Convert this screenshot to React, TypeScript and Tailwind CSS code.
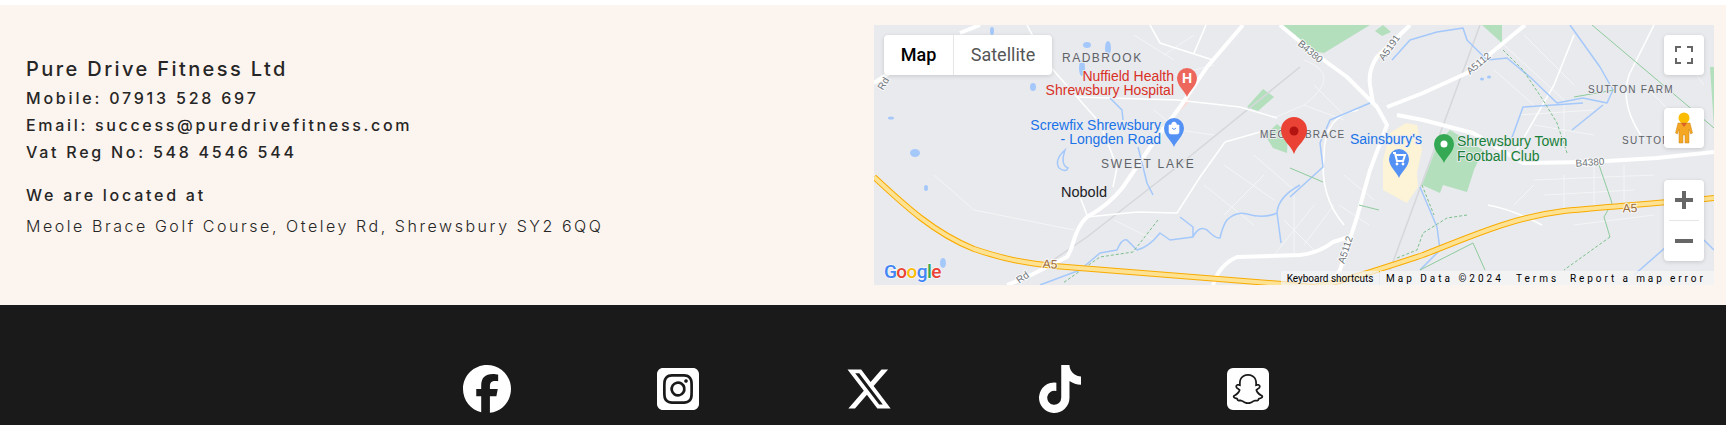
import { FaFacebook, FaSquareInstagram, FaXTwitter, FaTiktok, FaSquareSnapchat } from "react-icons/fa6"

const a5 = "M0 152C30 180 60 208 100 224C130 234 150 238 180 241L408 259L440 262C470 256 500 246 549 230C600 210 640 192 690 186C740 181 790 178 840 173"

const majorRoads = [
  "M369 0L333 42L306 82L279 118L249 162Q235 180 213 192Q204 200 199 218Q196 228 193 232L153 252L133 260",
  "M406 0L436 25L473 52L503 82L513 100L496 145L483 192L466 245L455 260",
  "M536 0L503 32Q494 45 496 60L499 78",
  "M513 82L549 68L593 48L651 0",
  "M523 90L549 95L599 108L649 138L716 137L783 133L840 127",
  "M339 260Q345 240 363 232L426 230Q445 228 459 217L475 212",
  "M0 58L20 45M106 0L86 8",
]

const minorRoads = [
  "M351 117L386 107M351 117L326 152L303 188L263 187L213 192",
  "M203 72L303 75L366 82L403 93",
  "M276 0L286 18L339 35",
  "M153 0L173 38L203 72L226 98L243 142L239 162",
  "M206 172L213 190",
  "M332 0L320 28",
  "M668 200Q640 185 614 180M700 10L680 60L640 130",
  "M780 0L755 50Q745 80 770 115",
  "M484 85Q450 90 450 130Q445 170 470 200",
]

const streets = [
  "M430 35Q470 50 430 80L402 92M430 80L470 95M440 60L470 90",
  "M290 30L320 10M300 50L340 40M260 10L300 35",
  "M330 160L380 200M350 140L400 175M380 130L420 165M390 150L350 190",
  "M420 170L420 230M440 180L400 230M460 180L430 220",
  "M270 100L340 110M280 85L310 110",
  "M630 20L690 75M650 10L700 60M620 45L660 80",
  "M645 90L720 85M660 100L720 110M690 75L690 125",
  "M660 155L780 150M670 170L760 165M720 140L720 180M690 150L690 185M750 140L750 180",
  "M700 200L780 190M640 180L660 160",
  "M800 20L830 60M770 60L820 110",
  "M470 150L500 175M465 180L495 200",
  "M240 195L280 215M410 195L440 225",
  "M60 150L100 185L200 205",
]

const water = [
  "M306 192L319 202L319 212Q325 200 333 205Q342 214 346 213Q349 200 353 195Q362 186 373 189Q390 194 403 188Q404 172 426 160",
  "M166 260L206 245L226 228L243 225Q248 213 253 215L263 225Q275 222 286 208L296 215L319 212",
  "M416 172L449 142L446 118L456 95L496 78",
  "M518 35L536 15L563 7L589 3L593 15L613 35L633 33L656 52L683 78L709 73L733 78L739 65L726 42L696 0",
  "M636 118L649 82L709 78",
  "M698 105L729 80",
  "M236 73L248 85L249 95",
  "M264 122L273 158L279 170",
  "M546 162L563 202L566 225L546 245",
  "M403 188L407 218",
  "M760 250L800 215M830 215L840 225",
]

const ponds = [
  [118, 6, 2, 4],
  [213, 20, 4, 3],
  [234, 23, 3, 7],
  [208, 43, 3, 8],
  [159, 62, 3, 4],
  [17, 93, 3, 1.5],
  [41, 128, 5, 4],
  [52, 163, 2, 3],
  [69, 238, 3, 5],
  [608, 54, 2, 1.5],
  [615, 52, 2, 1.5],
]

const greens = [
  "373,82 389,64 400,72 384,86",
  "391,110 403,99 414,108 413,128 399,123",
  "406,0 426,0 426,13",
  "416,0 496,0 450,28 430,25",
  "501,6 509,0 517,7 508,11",
  "608,0 628,0 628,18",
  "836,42 840,42 840,102",
  "548,160 564,118 576,105 609,125 600,145 593,167 569,160 566,168",
]

const dashed = [
  "M284 195L259 227L226 232L189 258",
  "M629 25L649 45L669 75L683 98L693 128",
  "M593 190L573 193L549 208L543 225L523 233",
  "M736 212L690 245",
  "M548 160L560 190",
]

const thinGreen = [
  "M718 0L840 103",
  "M416 143L449 157",
  "M546 245L599 218L611 245",
  "M725 140L738 178L730 192L736 212",
  "M700 72L740 65M485 180L505 185",
]

function Pin({ x, y, color, children }: { x: number; y: number; color: string; children?: React.ReactNode }) {
  return (
    <g transform={`translate(${x} ${y})`}>
      <path d="M0 19C-2 13 -10 8 -10 0A10 10 0 0 1 10 0C10 8 2 13 0 19Z" fill={color} />
      {children}
    </g>
  )
}

function Label({ x, y, children, fill = "#5f6368", size = 11, spacing = 1.1, anchor = "start" }: { x: number; y: number; children: string; fill?: string; size?: number; spacing?: number; anchor?: "start" | "end" }) {
  return (
    <text x={x} y={y} fill={fill} fontSize={size} letterSpacing={spacing} textAnchor={anchor} stroke="#e9eaee" strokeWidth={2} paintOrder="stroke" fontFamily="'Liberation Sans', sans-serif">
      {children}
    </text>
  )
}

function RoadLabel({ x, y, angle, children, fill = "#70757a", size = 10 }: { x: number; y: number; angle: number; children: string; fill?: string; size?: number }) {
  return (
    <text transform={`translate(${x} ${y}) rotate(${angle})`} textAnchor="middle" dominantBaseline="middle" fill={fill} fontSize={size} stroke="#ffffff" strokeOpacity={0.7} strokeWidth={2} paintOrder="stroke" fontFamily="'Liberation Sans', sans-serif">
      {children}
    </text>
  )
}

function MapDrawing() {
  return (
    <svg viewBox="0 0 840 260" width={840} height={260} className="block">
      <rect width={840} height={260} fill="#e8eaed" />
      <polygon points="532,98 543,100 548,125 543,148 544,162 533,178 509,165 509,135 516,108" fill="#fdf3d6" />
      {greens.map((p, i) => (
        <polygon key={i} points={p} fill="#b3dfbd" />
      ))}
      <path d="M303 84L314 72L316 76L306 86Z" fill="#fbdcd9" />
      {streets.map((d, i) => (
        <path key={i} d={d} fill="none" stroke="#f4f5f6" strokeWidth={1} />
      ))}
      <path d="M606 0L516 245M426 42L299 145L213 212L169 242" fill="none" stroke="#d5d7da" strokeWidth={1.5} />
      {minorRoads.map((d, i) => (
        <path key={i} d={d} fill="none" stroke="#ffffff" strokeWidth={1.6} />
      ))}
      {majorRoads.map((d, i) => (
        <path key={i} d={d} fill="none" stroke="#ffffff" strokeWidth={4} strokeLinejoin="round" />
      ))}
      {water.map((d, i) => (
        <path key={i} d={d} fill="none" stroke="#a5c8fb" strokeWidth={1.5} strokeLinejoin="round" />
      ))}
      {ponds.map(([cx, cy, rx, ry], i) => (
        <ellipse key={i} cx={cx} cy={cy} rx={rx} ry={ry} fill="#a5c8fb" />
      ))}
      <path d="M191 125Q180 135 185 143Q192 148 194 143Q186 140 191 125Z" fill="none" stroke="#a5c8fb" strokeWidth={1.5} />
      {dashed.map((d, i) => (
        <path key={i} d={d} fill="none" stroke="#7cbf8c" strokeWidth={1} strokeDasharray="3 2" />
      ))}
      {thinGreen.map((d, i) => (
        <path key={i} d={d} fill="none" stroke="#8fcb9d" strokeWidth={1} />
      ))}
      <path d={a5} fill="none" stroke="#f9ab00" strokeWidth={6} />
      <path d={a5} fill="none" stroke="#fde293" strokeWidth={4} />

      <Label x={188} y={37} size={12} spacing={1.5}>RADBROOK</Label>
      <Label x={227} y={143} size={12} spacing={1.8}>SWEET LAKE</Label>
      <Label x={386} y={113} size={10} spacing={1.2}>MEOLE BRACE</Label>
      <Label x={714} y={68} size={10} spacing={1.3}>SUTTON FARM</Label>
      <Label x={748} y={119} size={10} spacing={1.3}>SUTTON</Label>
      <Label x={187} y={172} size={14.5} spacing={0} fill="#202124">Nobold</Label>
      <Label x={300} y={56} size={14} spacing={0} fill="#d93025" anchor="end">Nuffield Health</Label>
      <Label x={300} y={69.500} size={14} spacing={0} fill="#d93025" anchor="end">Shrewsbury Hospital</Label>
      <Label x={287} y={105} size={14} spacing={0} fill="#1a73e8" anchor="end">Screwfix Shrewsbury</Label>
      <Label x={287} y={119} size={14} spacing={0} fill="#1a73e8" anchor="end">- Longden Road</Label>
      <Label x={476} y={119} size={14} spacing={0} fill="#1a73e8">Sainsbury's</Label>
      <Label x={583} y={121} size={14} spacing={0} fill="#188038">Shrewsbury Town</Label>
      <Label x={583} y={136} size={14} spacing={0} fill="#188038">Football Club</Label>

      <RoadLabel x={436} y={27} angle={40}>B4380</RoadLabel>
      <RoadLabel x={516} y={23} angle={-55}>A5191</RoadLabel>
      <RoadLabel x={605} y={39} angle={-40}>A5112</RoadLabel>
      <RoadLabel x={472} y={225} angle={-72}>A5112</RoadLabel>
      <RoadLabel x={716} y={138} angle={-4}>B4380</RoadLabel>
      <RoadLabel x={756} y={184} angle={-2} fill="#9a6a3a" size={12}>A5</RoadLabel>
      <RoadLabel x={176} y={240} angle={3} fill="#9a6a3a" size={12}>A5</RoadLabel>
      <RoadLabel x={149} y={253} angle={-35}>Rd</RoadLabel>
      <RoadLabel x={10} y={59} angle={-60}>Rd</RoadLabel>

      <Pin x={313} y={53} color="#ee675c">
        <text textAnchor="middle" y={5} fontSize={14} fontWeight={700} fill="#ffffff" fontFamily="'Liberation Sans', sans-serif">H</text>
      </Pin>
      <Pin x={300} y={103} color="#5491f5">
        <path d="M-5 -3H5V4Q5 6 3 6H-3Q-5 6 -5 4ZM-2.500 -3Q-2.500 -6 0 -6Q2.500 -6 2.500 -3" fill="#ffffff" stroke="#ffffff" strokeWidth={0.6} />
        <path d="M-2 0Q0 3 2 0" fill="none" stroke="#5491f5" />
      </Pin>
      <Pin x={525} y={134} color="#5491f5">
        <path d="M-6 -6H-4L-2 2H4L6 -4H-3" fill="none" stroke="#ffffff" strokeWidth={2} />
        <circle cx={-2} cy={5} r={1.4} fill="#ffffff" />
        <circle cx={4} cy={5} r={1.4} fill="#ffffff" />
      </Pin>
      <Pin x={570} y={119} color="#34a853">
        <circle r={3.5} fill="#ffffff" />
      </Pin>
      <path d="M420 129C417 120 407 115 407 105A13 13 0 0 1 433 105C433 115 423 120 420 129Z" fill="#ea4335" />
      <circle cx={420} cy={106} r={4.5} fill="#b31412" />

      <text x={10} y={253} fontSize={19} fontWeight={500} letterSpacing={-0.6} stroke="#ffffff" strokeOpacity={0.6} strokeWidth={1.5} paintOrder="stroke" fontFamily="Roboto, sans-serif">
        <tspan fill="#4285f4">G</tspan>
        <tspan fill="#ea4335">o</tspan>
        <tspan fill="#fbbc05">o</tspan>
        <tspan fill="#4285f4">g</tspan>
        <tspan fill="#34a853">l</tspan>
        <tspan fill="#ea4335">e</tspan>
      </text>
    </svg>
  )
}

function MapControls() {
  return (
    <>
      <div className="absolute left-[10px] top-[10px] flex h-10 rounded-sm bg-white font-['Roboto',sans-serif] text-lg shadow-[0_1px_4px_rgba(0,0,0,0.15)]">
        <div className="flex w-[70px] items-center justify-center border-r border-[#e6e6e6] font-medium text-black">Map</div>
        <div className="flex w-[98px] items-center justify-center text-[#565656]">Satellite</div>
      </div>
      <div className="absolute right-[10px] top-[10px] flex h-10 w-10 items-center justify-center rounded-sm bg-white shadow-[0_1px_4px_rgba(0,0,0,0.15)]">
        <svg viewBox="0 0 18 18" className="h-[18px] w-[18px]" fill="#666666">
          <path d="M0 0H6V2H2V6H0ZM12 0H18V6H16V2H12ZM0 12H2V16H6V18H0ZM16 12H18V18H12V16H16Z" />
        </svg>
      </div>
      <div className="absolute right-[10px] top-[83px] flex h-10 w-10 items-center justify-center rounded-sm bg-white shadow-[0_1px_4px_rgba(0,0,0,0.15)]">
        <svg viewBox="0 0 18 32" className="h-8 w-[18px]">
          <circle cx={9} cy={6} r={5.5} fill="#fbbc04" />
          <path d="M3 11H15L17.500 21L15.500 22L14 17V31H10V23H8V31H4V17L2.500 22L0.500 21Z" fill="#f5a623" stroke="#c98a1b" strokeWidth={0.5} />
          <path d="M6 11L9 15L12 11Z" fill="#d9622b" />
        </svg>
      </div>
      <div className="absolute right-[10px] top-[155px] flex w-10 flex-col items-center rounded-sm bg-white shadow-[0_1px_4px_rgba(0,0,0,0.15)]">
        <div className="flex h-10 items-center justify-center">
          <svg viewBox="0 0 18 18" className="h-[18px] w-[18px]" fill="#666666">
            <path d="M7 0H11V7H18V11H11V18H7V11H0V7H7Z" />
          </svg>
        </div>
        <div className="h-px w-[30px] bg-[#e6e6e6]" />
        <div className="flex h-10 items-center justify-center">
          <svg viewBox="0 0 18 18" className="h-[18px] w-[18px]" fill="#666666">
            <path d="M0 7H18V11H0Z" />
          </svg>
        </div>
      </div>
      <div className="absolute bottom-0 right-0 flex h-[14px] items-center font-['Roboto',sans-serif] text-[10px] text-black">
        <div className="flex h-full w-[98px] items-center justify-center bg-[#f5f5f5]/70 tracking-normal">Keyboard shortcuts</div>
        <div className="ml-px flex h-full w-[334px] items-center bg-[#f5f5f5]/80 tracking-[3px]">
          <span className="w-[131px] whitespace-nowrap pl-[6px]">Map Data ©2024</span>
          <span className="w-[55px] pl-[5px]">Terms</span>
          <span className="whitespace-nowrap pl-[4px] tracking-[2.9px]">Report a map error</span>
        </div>
      </div>
    </>
  )
}

export default function App() {
  return (
    <div className="bg-white pt-[5px] font-['Inter',sans-serif]">
      <section className="flex h-[300px] items-center justify-between bg-[#fcf4ee] pl-[26px] pr-3 text-[#262626]">
        <div className="pb-[17px]">
          <h2 className="mb-px text-xl font-medium leading-[30px] tracking-[2.4px]">Pure Drive Fitness Ltd</h2>
          <p className="text-base font-medium leading-[27px] tracking-[2.8px]">Mobile: 07913 528 697</p>
          <p className="text-base font-medium leading-[27px] tracking-[2.68px]">Email: success@puredrivefitness.com</p>
          <p className="text-base font-medium leading-[27px] tracking-[2.75px]">Vat Reg No: 548 4546 544</p>
          <p className="mt-4 text-base font-medium leading-[27px] tracking-[2.75px]">We are located at</p>
          <p className="mt-1 text-base font-light leading-[27px] tracking-[2.55px]">Meole Brace Golf Course, Oteley Rd, Shrewsbury SY2 6QQ</p>
        </div>
        <div className="relative h-[260px] w-[840px] overflow-hidden">
          <MapDrawing />
          <MapControls />
        </div>
      </section>
      <footer className="flex justify-center gap-[146px] bg-[#1a1a1a] pb-3 pl-[6px] pt-[60px] text-white">
        <FaFacebook className="h-12 w-12" />
        <FaSquareInstagram className="h-12 w-[42px]" />
        <FaXTwitter className="h-12 w-12" />
        <FaTiktok className="h-12 w-[42px]" />
        <FaSquareSnapchat className="h-12 w-[42px]" />
      </footer>
    </div>
  )
}
